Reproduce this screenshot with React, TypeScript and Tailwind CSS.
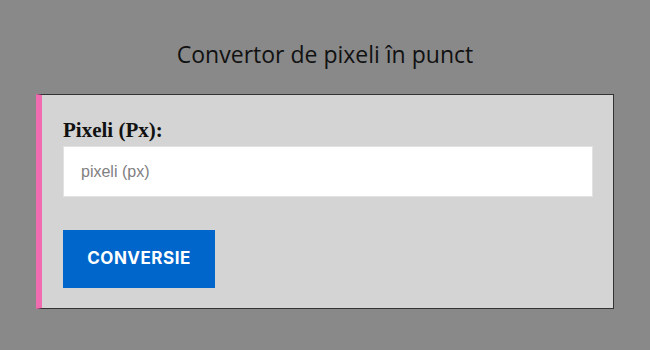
import React from "react";

export default function App() {
  return (
    <div className="w-[650px] h-[350px] bg-[#898989] overflow-hidden flex flex-col">
      <div className="h-[94px] pt-[37px] text-center">
        <h1 className="text-[23px] leading-[34px] text-[#111] font-normal font-['Open_Sans',_'Noto_Sans',_sans-serif]">
          Convertor de pixeli în punct
        </h1>
      </div>
      <div className="ml-[36px] w-[578px] flex flex-col items-start bg-[#d4d4d4] border-l-[6px] border-l-[#f06bb0] border-y border-r border-y-[#333] border-r-[#333] pl-[21px] pr-[20px] pt-[22px] pb-[20px]">
        <label className="block text-[21px] leading-[26px] font-bold text-[#111] font-['Liberation_Serif',_serif]">
          Pixeli (Px):
        </label>
        <input
          type="text"
          placeholder="pixeli (px)"
          className="mt-[3px] block w-[530px] h-[51px] bg-white border border-[#e2e2e2] px-[17px] text-[16px] text-[#333] placeholder:text-[#808080] outline-none font-['Liberation_Sans',_Arial,_sans-serif]"
        />
        <button className="mt-[33px] flex items-center justify-center w-[152px] h-[58px] bg-[#0066cc] text-white text-[17px] font-bold tracking-[0.5px] font-['Inter',_'Liberation_Sans',_sans-serif]">
          CONVERSIE
        </button>
      </div>
    </div>
  );
}
